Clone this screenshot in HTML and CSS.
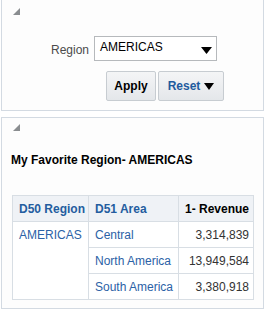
FILE: index.html
```html
<!DOCTYPE html>
<html>
<head>
<meta charset="utf-8">
<link rel="stylesheet" href="styles.css">
</head>
<body>
<div class="panel panel-top">
  <svg class="corner" width="8" height="8" viewBox="0 0 8 8"><polygon points="7,0 7,7 0,7" fill="#8a8d90"/></svg>
  <div class="filter-row">
    <span class="label">Region</span>
    <div class="select"><span>AMERICAS</span><svg width="11" height="7" viewBox="0 0 11 7"><polygon points="0,0 11,0 5.5,7" fill="#000"/></svg></div>
  </div>
  <div class="button-row">
    <button class="btn btn-apply">Apply</button>
    <button class="btn btn-reset">Reset <svg width="10" height="7" viewBox="0 0 10 7"><polygon points="0,0 10,0 5,7" fill="#000"/></svg></button>
  </div>
</div>
<div class="panel panel-bottom">
  <svg class="corner" width="8" height="8" viewBox="0 0 8 8"><polygon points="7,0 7,7 0,7" fill="#8a8d90"/></svg>
  <div class="title">My Favorite Region- AMERICAS</div>
  <table class="pivot">
    <colgroup><col class="c1"><col class="c2"><col class="c3"></colgroup>
    <thead>
      <tr><th>D50 Region</th><th>D51 Area</th><th class="r">1- Revenue</th></tr>
    </thead>
    <tbody>
      <tr><td class="dim" rowspan="3">AMERICAS</td><td class="dim">Central</td><td class="num">3,314,839</td></tr>
      <tr><td class="dim">North America</td><td class="num">13,949,584</td></tr>
      <tr><td class="dim">South America</td><td class="num">3,380,918</td></tr>
    </tbody>
  </table>
</div>
</body>
</html>
```
FILE: styles.css
```css
html, body {
  margin: 0;
  padding: 0;
  background: #fff;
  font-family: "Liberation Sans", Arial, sans-serif;
  font-size: 12px;
}
.panel {
  box-sizing: border-box;
  width: 263px;
  margin-left: 1px;
  border: 1px solid #d3dae2;
  background: #fdfdfd;
}
.panel-top {
  border-top: none;
  height: 111px;
  padding-top: 8px;
}
.panel-bottom {
  margin-top: 6px;
  height: 192px;
  padding-top: 6px;
}
.corner {
  display: block;
  margin-left: 11px;
}
.filter-row {
  display: flex;
  align-items: center;
  margin-top: 20px;
  padding-left: 49px;
}
.label {
  color: #4b4b4b;
  margin-right: 5px;
  margin-top: 3px;
}
.select {
  box-sizing: border-box;
  width: 123px;
  height: 25px;
  border: 1px solid #b6b9bc;
  background: #fff;
  display: flex;
  align-items: center;
  justify-content: space-between;
  padding: 0 4px 0 5px;
  color: #000;
}
.select span { margin-top: -3px; }
.select svg { margin-top: 3px; }
.button-row {
  display: flex;
  gap: 2px;
  margin-top: 10px;
  padding-left: 104px;
}
.btn {
  box-sizing: border-box;
  height: 30px;
  border: 1px solid #c7ccd1;
  border-radius: 2px;
  background: linear-gradient(#f4f5f6, #e4e7ea);
  font-family: "Liberation Sans", Arial, sans-serif;
  font-size: 12px;
  font-weight: bold;
  padding: 0;
  display: flex;
  align-items: center;
  justify-content: center;
}
.btn-apply {
  width: 50px;
  color: #000;
}
.btn-reset {
  width: 66px;
  color: #1f5b9e;
  gap: 4px;
}
.title {
  font-weight: bold;
  color: #000;
  margin-top: 21px;
  margin-left: 9px;
  line-height: 14px;
}
.pivot {
  border-collapse: collapse;
  table-layout: fixed;
  width: 241px;
  margin-left: 10px;
  margin-top: 28px;
  font-size: 12px;
}
.pivot col.c1 { width: 76px; }
.pivot col.c2 { width: 90px; }
.pivot col.c3 { width: 75px; }
.pivot th, .pivot td {
  border: 1px solid #d8dee4;
  height: 26px;
  padding: 6px 4px 0 6px;
  box-sizing: border-box;
  vertical-align: top;
  line-height: 14px;
  white-space: nowrap;
  overflow: hidden;
}
.pivot th {
  background: #eff2f6;
  text-align: left;
  color: #245d9f;
  font-weight: bold;
}
.pivot th.r {
  text-align: right;
  color: #000;
}
.pivot td { background: #fff; }
.pivot td.dim { color: #2b62a6; }
.pivot td.num { text-align: right; color: #333; }
```
